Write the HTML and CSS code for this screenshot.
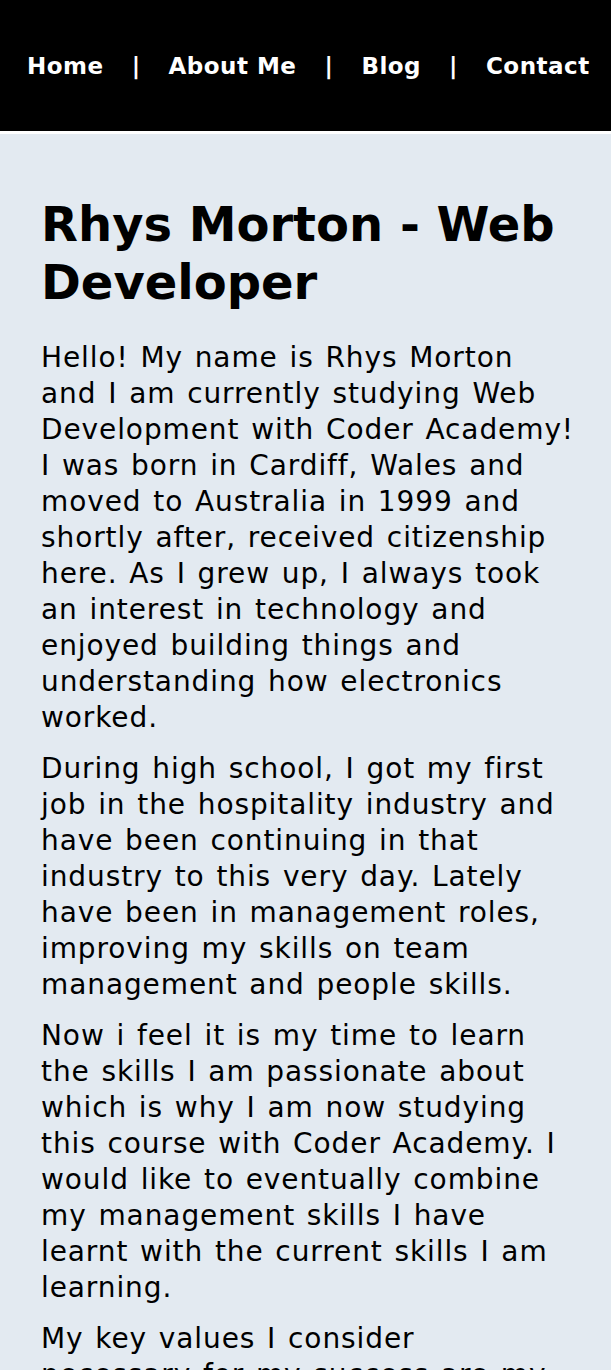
FILE: index.html
```html
<!DOCTYPE html>
<html lang="en">
<head>
<meta charset="utf-8">
<title>Rhys Morton - Web Developer</title>
<link rel="stylesheet" href="styles.css">
</head>
<body>
<header class="site-header">
  <nav class="nav">
    <a href="#" class="nav-link">Home</a>
    <span class="nav-sep">|</span>
    <a href="#" class="nav-link">About Me</a>
    <span class="nav-sep">|</span>
    <a href="#" class="nav-link">Blog</a>
    <span class="nav-sep">|</span>
    <a href="#" class="nav-link">Contact</a>
  </nav>
</header>
<main class="content">
  <h1 class="title">Rhys Morton - Web Developer</h1>
  <p class="text">Hello! My name is Rhys Morton and I am currently studying Web Development with Coder Academy! I was born in Cardiff, Wales and moved to Australia in 1999 and shortly after, received citizenship here. As I grew up, I always took an interest in technology and enjoyed building things and understanding how electronics worked.</p>
  <p class="text">During high school, I got my first job in the hospitality industry and have been continuing in that industry to this very day. Lately have been in management roles, improving my skills on team management and people skills.</p>
  <p class="text">Now i feel it is my time to learn the skills I am passionate about which is why I am now studying this course with Coder Academy. I would like to eventually combine my management skills I have learnt with the current skills I am learning.</p>
  <p class="text">My key values I consider necessary for my success are my determination, my willingness to learn and my ability to work well with others.</p>
</main>
</body>
</html>
```

FILE: styles.css
```css
html, body {
  margin: 0;
  padding: 0;
}
body {
  background: #e3eaf1;
  font-family: "DejaVu Sans", Verdana, sans-serif;
  color: #000;
}
.site-header {
  background: #000;
  height: 131px;
  border-bottom: 3px solid #fff;
  display: flex;
  align-items: center;
}
.nav {
  display: flex;
  align-items: center;
  gap: 28px;
  padding: 0 0 0 27px;
  font-size: 23px;
  letter-spacing: 0.5px;
  font-weight: bold;
  color: #fff;
}
.nav-link {
  color: #fff;
  text-decoration: none;
}
.nav-sep {
  color: #fff;
}
.content {
  padding: 62px 36px 20px 41px;
}
.title {
  margin: 0 0 29px 0;
  font-size: 48px;
  line-height: 1.2;
  font-weight: bold;
}
.text {
  margin: 0 0 15px 0;
  font-size: 28px;
  line-height: 36px;
  letter-spacing: 0.9px;
  word-spacing: 2px;
}
```
